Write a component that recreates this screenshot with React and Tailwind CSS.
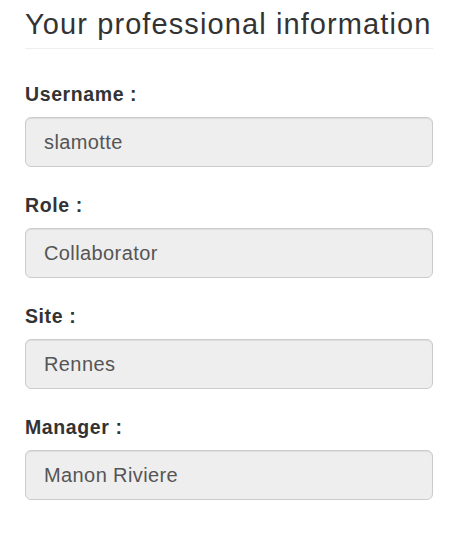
const fields = [
  { label: "Username :", value: "slamotte" },
  { label: "Role :", value: "Collaborator" },
  { label: "Site :", value: "Rennes" },
  { label: "Manager :", value: "Manon Riviere" },
];

export default function App() {
  return (
    <div className="min-h-[535px] bg-white pl-[25px] pr-[26px] pt-[8px] font-['Liberation_Sans',Arial,sans-serif] text-[#333]">
      <h2 className="h-[32px] text-[29px] leading-[32px] tracking-[1.1px] font-normal whitespace-nowrap">
        Your professional information
      </h2>
      <div className="mt-[8px] border-t border-[#eee]" />

      <form className="mt-[35px] flex flex-col gap-[28px]">
        {fields.map((field) => (
          <div key={field.label} className="flex flex-col gap-[13px]">
            <label className="h-[20px] text-[19.5px] leading-[20px] font-bold tracking-[0.6px]">
              {field.label}
            </label>
            <div className="flex h-[50px] items-center rounded-[6px] border border-[#ccc] bg-[#eee] pl-[18px] text-[20px] tracking-[0.4px] text-[#555] shadow-[inset_0_1px_1px_rgba(0,0,0,0.075)]">
              {field.value}
            </div>
          </div>
        ))}
      </form>
    </div>
  );
}
